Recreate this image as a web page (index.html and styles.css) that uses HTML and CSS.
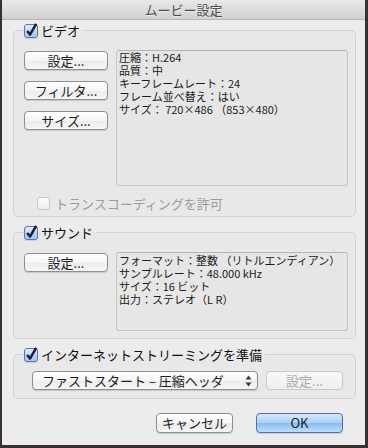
FILE: index.html
```html
<!DOCTYPE html>
<html>
    <head>
        <meta charset="utf-8">
        <link rel="stylesheet" href="styles.css">
    </head>
    <body>
        <div class="window">
            <div class="titlebar">ムービー設定</div>

            <div class="content">
                <fieldset class="group video">
                    <legend class="group-label">
                        <span class="cb"><svg viewBox="0 0 12 12"><path d="M2.2 6 L5 9.6 L11.2 -1.2"/></svg></span>
                        <span>ビデオ</span>
                    </legend>
                    <div class="media-row">
                        <div class="buttons">
                            <div class="btn">設定...</div>
                            <div class="btn">フィルタ...</div>
                            <div class="btn">サイズ...</div>
                        </div>
                        <div class="info info-video">
                            圧縮：H.264<br>
                            品質：中<br>
                            キーフレームレート：24<br>
                            フレーム並べ替え：はい<br>
                            サイズ： 720×486 （853×480）
                        </div>
                    </div>
                    <div class="option">
                        <span class="cb-off"></span>
                        <span>トランスコーディングを許可</span>
                    </div>
                </fieldset>

                <fieldset class="group sound">
                    <legend class="group-label">
                        <span class="cb"><svg viewBox="0 0 12 12"><path d="M2.2 6 L5 9.6 L11.2 -1.2"/></svg></span>
                        <span>サウンド</span>
                    </legend>
                    <div class="media-row">
                        <div class="buttons">
                            <div class="btn">設定...</div>
                        </div>
                        <div class="info info-sound">
                            フォーマット：整数 （リトルエンディアン）<br>
                            サンプルレート：48.000 kHz<br>
                            サイズ：16 ビット<br>
                            出力：ステレオ（L R）
                        </div>
                    </div>
                </fieldset>

                <fieldset class="group stream">
                    <legend class="group-label">
                        <span class="cb"><svg viewBox="0 0 12 12"><path d="M2.2 6 L5 9.6 L11.2 -1.2"/></svg></span>
                        <span>インターネットストリーミングを準備</span>
                    </legend>
                    <div class="stream-row">
                        <div class="popup">
                            <span>ファストスタート&nbsp;–&nbsp;圧縮ヘッダ</span>
                            <svg class="arrows" viewBox="0 0 7 12"><path d="M3.5 0.5 L6.5 4.5 L0.5 4.5 Z M3.5 11.5 L6.5 7.5 L0.5 7.5 Z"/></svg>
                        </div>
                        <div class="btn btn-disabled">設定...</div>
                    </div>
                </fieldset>

                <div class="footer">
                    <div class="btn btn-cancel">キャンセル</div>
                    <div class="btn btn-ok">OK</div>
                </div>
            </div>
        </div>
    </body>
</html>
```

FILE: styles.css
```css
* {
    box-sizing: border-box;
}

body {
    margin: 0;
    width: 368px;
    height: 448px;
    overflow: hidden;
    background-color: #3a302e;
    font-family: "Noto Sans CJK JP", "Noto Sans", sans-serif;
    color: #1a1a1a;
}

.window {
    margin-left: 2px;
    width: 363px;
    height: 445px;
    background-color: #ececec;
}

.titlebar {
    height: 20px;
    line-height: 19px;
    text-align: center;
    font-size: 13px;
    color: #4b4b4b;
    text-shadow: 0 1px 0 rgba(255, 255, 255, 0.5);
    background: linear-gradient(#e8e8e8, #d1d1d1);
    border-bottom: 1px solid #b8b8b8;
    border-radius: 4px 4px 0 0;
}

.content {
    padding: 0 9px 0 11px;
}

.group {
    margin: 0;
    min-width: 0;
    border: 1px solid #d2d2d2;
    border-radius: 5px;
    background-color: #e8e8e8;
    padding: 12px 7px 7px 10px;
}

.video {
    margin-top: 3px;
    padding-bottom: 5px;
}

.sound {
    margin-top: 8px;
}

.stream {
    margin-top: 8px;
    padding-top: 9px;
    padding-bottom: 8px;
}

.group-label {
    display: flex;
    align-items: center;
    gap: 3px;
    height: 15px;
    padding: 0 3px 0 1px;
    margin-left: -1px;
    font-size: 13px;
    line-height: 15px;
    color: #111;
}

/* checkboxes */
.cb {
    display: block;
    width: 14px;
    height: 14px;
    border: 1px solid #5a76a6;
    border-radius: 3px;
    background: linear-gradient(#e4eefa, #b9d2f0 55%, #a9c8ee);
    box-shadow: 0 1px 1px rgba(0, 0, 0, 0.12);
}

.cb svg {
    display: block;
    width: 12px;
    height: 12px;
    overflow: visible;
}

.cb path {
    fill: none;
    stroke: #17213b;
    stroke-width: 2.5;
    stroke-linejoin: round;
}

.cb-off {
    display: block;
    width: 13px;
    height: 13px;
    border: 1px solid #c9c9c9;
    border-radius: 3px;
    background: linear-gradient(#fbfbfb, #eeeeee);
}

.media-row {
    display: flex;
    gap: 8px;
}

.buttons {
    width: 84px;
    display: flex;
    flex-direction: column;
    gap: 11px;
    padding-top: 1px;
}

.btn {
    height: 19px;
    border: 1px solid #8f8f8f;
    border-radius: 4px;
    background: linear-gradient(#ffffff, #f5f5f5 50%, #ebebeb 51%, #f6f6f6);
    box-shadow: 0 1px 1px rgba(0, 0, 0, 0.14);
    font-size: 13px;
    line-height: 17px;
    text-align: center;
    color: #1c1c1c;
}

.info {
    flex: 1;
    background-color: #e6e6e6;
    border: 1px solid #c6c6c6;
    border-top-color: #b6b6b6;
    border-radius: 3px;
    padding: 0 2px;
    font-size: 11px;
    line-height: 13px;
    color: #1a1a1a;
}

.info-video {
    height: 136px;
}

.info-sound {
    height: 79px;
    padding-top: 1px;
}

.option {
    display: flex;
    align-items: center;
    gap: 5px;
    margin: 10px 0 0 13px;
    height: 15px;
    font-size: 13px;
    line-height: 15px;
    color: #9c9c9c;
}

.stream-row {
    display: flex;
    gap: 8px;
    margin-left: 8px;
}

.popup {
    width: 226px;
    height: 19px;
    display: flex;
    align-items: center;
    justify-content: space-between;
    padding: 0 5px 0 9px;
    border: 1px solid #8f8f8f;
    border-radius: 4px;
    background: linear-gradient(#ffffff, #f5f5f5 50%, #ebebeb 51%, #f6f6f6);
    box-shadow: 0 1px 1px rgba(0, 0, 0, 0.14);
    font-size: 13px;
    line-height: 17px;
    color: #1c1c1c;
}

.arrows {
    width: 7px;
    height: 12px;
    fill: #3a3a3a;
}

.btn-disabled {
    width: 77px;
    border-color: #c9c9c9;
    background: linear-gradient(#f8f8f8, #efefef);
    box-shadow: none;
    color: #a9a9a9;
}

.footer {
    display: flex;
    justify-content: flex-end;
    gap: 23px;
    margin-top: 14px;
    padding-right: 13px;
}

.btn-cancel {
    width: 77px;
    height: 20px;
    line-height: 18px;
}

.btn-ok {
    width: 87px;
    height: 20px;
    line-height: 18px;
    border-color: #5370a6;
    background: linear-gradient(#d6e8fc, #a9cff5 50%, #86bdf1 51%, #bddffc);
}
```
